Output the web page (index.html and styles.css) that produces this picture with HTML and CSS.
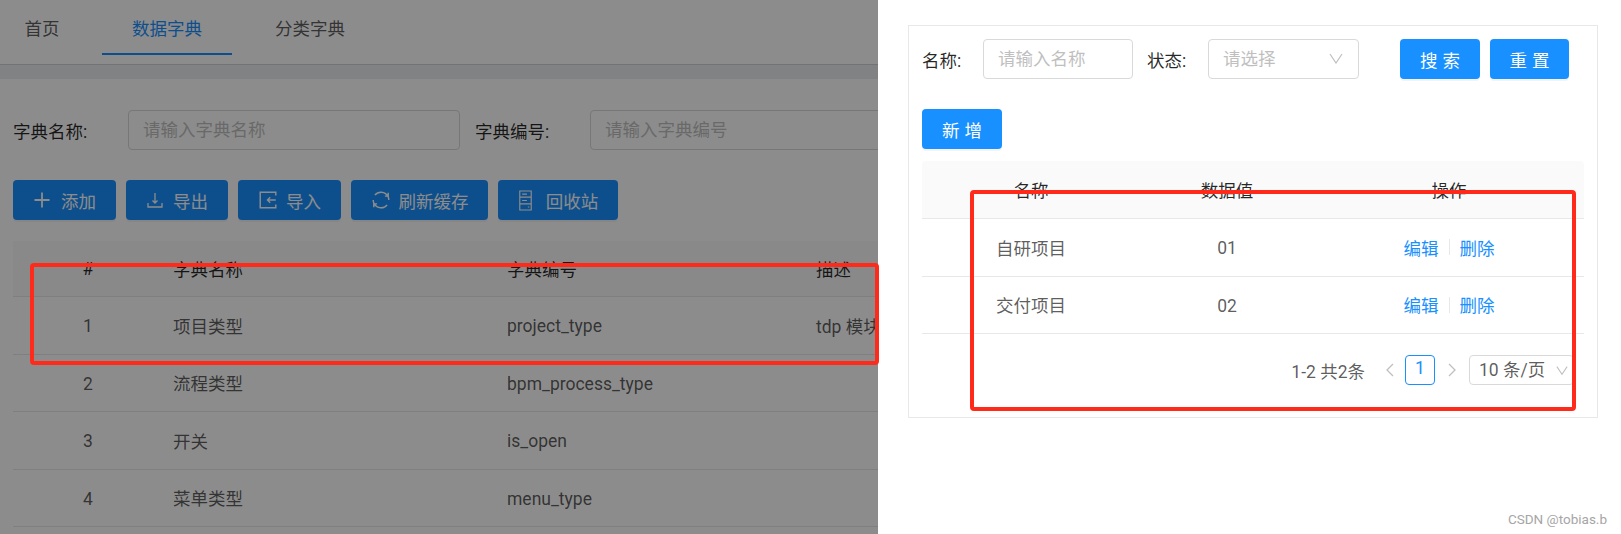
FILE: index.html
```html
<!DOCTYPE html>
<html lang="zh-CN">

<head>
  <meta charset="UTF-8">
  <title>数据字典</title>
  <link rel="stylesheet" href="styles.css">
</head>

<body>
  <div class="page">
    <main class="main">
      <nav class="tabs">
        <a class="tab tab-home">首页</a>
        <a class="tab tab-active">数据字典</a>
        <a class="tab">分类字典</a>
      </nav>
      <div class="strip"></div>

      <div class="filter">
        <label class="filter-label">字典名称:</label>
        <div class="field field-wide">请输入字典名称</div>
        <label class="filter-label filter-label-second">字典编号:</label>
        <div class="field field-wide field-second">请输入字典编号</div>
      </div>

      <div class="actions">
        <button class="btn btn-add">
          <svg class="ico" viewBox="0 0 18 18"><path d="M9 1.500v15M1.500 9h15" /></svg>添加
        </button>
        <button class="btn btn-export">
          <svg class="ico ico-export" viewBox="0 0 18 18"><path d="M9 2v10M6.500 9.500 9 12l2.500-2.500M2 12v4h14v-4" /></svg>导出
        </button>
        <button class="btn btn-import">
          <svg class="ico ico-import" viewBox="0 0 18 18"><path d="M16 5V2H2v14h14v-3M8.500 9H16M11 6.500 8.500 9l2.500 2.500" /></svg>导入
        </button>
        <button class="btn btn-refresh">
          <svg class="ico ico-refresh" viewBox="0 0 18 18"><path d="M3.500 4.500A7 7 0 0 1 15 5.500M2 9a7 7 0 0 0 .8 3.500M14.500 13.500A7 7 0 0 1 3 12.500M16 9a7 7 0 0 0-.8-3.500M15.500 2.500v3h-3M2.500 15.500v-3h3" /></svg>刷新缓存
        </button>
        <button class="btn btn-recycle">
          <svg class="ico ico-tall" viewBox="0 0 14 22"><path d="M1 1h12v20H1zM1 7.500h12M1 14.500h12M3.500 4.300h5M3.500 11h5M9.500 17.800H11" /></svg>回收站
        </button>
      </div>

      <div class="dict-table">
        <div class="dict-row dict-head">
          <span class="dict-num">#</span><span>字典名称</span><span>字典编号</span><span class="nowrap">描述</span>
        </div>
        <div class="dict-row">
          <span class="dict-num latin">1</span><span>项目类型</span><span class="latin">project_type</span><span class="nowrap">tdp 模块项目类型</span>
        </div>
        <div class="dict-row">
          <span class="dict-num latin">2</span><span>流程类型</span><span class="latin">bpm_process_type</span><span></span>
        </div>
        <div class="dict-row">
          <span class="dict-num latin">3</span><span>开关</span><span class="latin">is_open</span><span></span>
        </div>
        <div class="dict-row">
          <span class="dict-num latin">4</span><span>菜单类型</span><span class="latin">menu_type</span><span></span>
        </div>
      </div>
      <div class="mask"></div>
    </main>

    <aside class="drawer">
      <section class="card">
        <div class="search">
          <label class="search-label">名称:</label>
          <div class="field field-name">请输入名称</div>
          <label class="search-label search-label-second">状态:</label>
          <div class="field field-select">
            请选择
            <svg class="chevron" viewBox="0 0 14 11"><path d="M1 1 7 10l6-9" /></svg>
          </div>
          <button class="btn btn-primary btn-search"><span class="spaced">搜索</span></button>
          <button class="btn btn-primary btn-reset"><span class="spaced">重置</span></button>
        </div>

        <button class="btn btn-primary btn-new"><span class="spaced">新增</span></button>

        <div class="value-table">
          <div class="value-row value-head"><span>名称</span><span>数据值</span><span>操作</span></div>
          <div class="value-row">
            <span>自研项目</span><span class="latin">01</span>
            <span class="ops"><a>编辑</a><i class="divider"></i><a>删除</a></span>
          </div>
          <div class="value-row">
            <span>交付项目</span><span class="latin">02</span>
            <span class="ops"><a>编辑</a><i class="divider"></i><a>删除</a></span>
          </div>
        </div>

        <div class="pager">
          <span class="pager-total">1-2 共2条</span>
          <svg class="pager-arrow" viewBox="0 0 10 16"><path d="M8 2 2 8l6 6" /></svg>
          <span class="pager-item">1</span>
          <svg class="pager-arrow" viewBox="0 0 10 16"><path d="m2 2 6 6-6 6" /></svg>
          <div class="pager-size">
            10 条/页
            <svg class="chevron chevron-small" viewBox="0 0 14 11"><path d="M1 1 7 10l6-9" /></svg>
          </div>
        </div>
      </section>
      <span class="watermark">CSDN @tobias.b</span>
    </aside>

    <div class="mark mark-left"></div>
    <div class="mark mark-right"></div>
  </div>
</body>

</html>
```

FILE: styles.css
```css
* {
  box-sizing: border-box;
}

html,
body {
  margin: 0;
  height: 534px;
  overflow: hidden;
  background: #fff;
}

body {
  font-family: Roboto, "Noto Sans CJK SC", sans-serif;
  font-size: 17.500px;
  color: rgba(0, 0, 0, 0.65);
}

.page {
  position: relative;
  display: flex;
  width: 1621px;
  height: 534px;
  overflow: hidden;
}

.main {
  position: relative;
  width: 878px;
  flex: none;
  overflow: hidden;
}

.mask {
  position: absolute;
  inset: 0;
  background: rgba(0, 0, 0, 0.45);
}

/* tabs */
.tabs {
  display: flex;
  height: 65px;
  border-bottom: 1px solid #d0d2d5;
}

.tab {
  width: 130px;
  height: 55px;
  line-height: 59px;
  text-align: center;
}

.tab-home {
  width: 36px;
  margin-left: 24px;
  margin-right: 42px;
}

.tab-active {
  color: #1890ff;
  border-bottom: 2px solid #1890ff;
}

.tab-active + .tab {
  width: 70px;
  margin-left: 43px;
}

.strip {
  height: 14px;
  background: #e9edf1;
}

/* filter */
.filter {
  display: flex;
  align-items: center;
  padding: 31px 0 0 13px;
}

.filter-label {
  flex: none;
  width: 115px;
  color: rgba(0, 0, 0, 0.85);
}

.filter-label-second {
  margin-left: 15px;
}

.field {
  height: 40px;
  line-height: 38px;
  padding-left: 14px;
  border: 1px solid #d9d9d9;
  border-radius: 4px;
  color: #bfbfbf;
  background: #fff;
  flex: none;
}

.field-wide {
  width: 332px;
}

/* buttons */
.actions {
  display: flex;
  gap: 10px;
  margin: 30px 0 0 13px;
}

.btn {
  display: flex;
  align-items: center;
  justify-content: center;
  height: 40px;
  padding: 0;
  border: 0;
  border-radius: 4px;
  font: inherit;
  color: #fff;
  background: #1890ff;
  box-shadow: 0 2px 0 rgba(0, 0, 0, 0.045);
}

.btn-add { width: 103px; }
.btn-export { width: 102px; }
.btn-import { width: 103px; }
.btn-refresh { width: 137px; }
.btn-recycle { width: 120px; }

.ico {
  width: 18px;
  height: 18px;
  margin-right: 10px;
  fill: none;
  stroke: #fff;
  stroke-width: 1.300;
}

.btn-add .ico {
  stroke-width: 1.800;
}

.ico-export {
  margin-right: 9px;
}

.ico-import {
  width: 20px;
  height: 20px;
  margin-right: 8px;
}

.ico-refresh {
  width: 20px;
  height: 20px;
  margin-right: 8px;
}

.ico-tall {
  width: 15px;
  height: 21px;
  margin-right: 13px;
  stroke-width: 1.200;
}

/* dictionary table */
.dict-table {
  width: 1200px;
  margin: 21px 0 0 13px;
}

.dict-row {
  display: grid;
  grid-template-columns: 150px 334px 309px 1fr;
  align-items: center;
  height: 57.500px;
  border-bottom: 1px solid #e8e8e8;
}

.dict-row span:not(.dict-num) {
  padding-left: 10px;
}

.dict-head {
  height: 56px;
  color: rgba(0, 0, 0, 0.85);
  background: #fafafa;
}

.dict-num {
  text-align: center;
}

.latin {
  padding-top: 2px;
}

.nowrap {
  white-space: nowrap;
}

/* drawer */
.drawer {
  position: relative;
  flex: 1;
  padding: 25px 24px 0 30px;
  background: #fff;
}

.card {
  height: 393px;
  padding: 13px 13px 0;
  border: 1px solid #e8e8e8;
}

.search {
  display: flex;
  align-items: center;
}

.search-label {
  flex: none;
  width: 61px;
  color: rgba(0, 0, 0, 0.85);
}

.search-label-second {
  margin-left: 14px;
}

.field-name {
  width: 150px;
}

.field-select {
  position: relative;
  width: 151px;
}

.chevron {
  position: absolute;
  right: 15px;
  top: 13px;
  width: 14px;
  height: 11px;
  fill: none;
  stroke: #bfbfbf;
  stroke-width: 1.200;
}

.btn-primary {
  flex: none;
  width: 80px;
}

.btn-search {
  margin-left: 41px;
}

.btn-reset {
  width: 79px;
  margin-left: 10px;
}

.spaced {
  letter-spacing: 5px;
  margin-right: -5px;
}

.btn-new {
  margin-top: 30px;
}

.value-table {
  width: 662px;
  margin-top: 12px;
}

.value-row {
  display: grid;
  grid-template-columns: 218px 174px 270px;
  align-items: center;
  text-align: center;
  height: 57.500px;
  border-bottom: 1px solid #e8e8e8;
}

.value-head {
  height: 58px;
  border-radius: 4px 4px 0 0;
  color: rgba(0, 0, 0, 0.85);
  background: #fafafa;
}

.ops {
  display: flex;
  align-items: center;
  justify-content: center;
  color: #1890ff;
}

.divider {
  width: 1px;
  height: 16px;
  margin: 0 10px;
  background: #e8e8e8;
}

.pager {
  display: flex;
  align-items: center;
  justify-content: flex-end;
  width: 652px;
  margin-top: 21px;
}

.pager-total {
  margin-right: 20px;
}

.pager-arrow {
  width: 10px;
  height: 16px;
  fill: none;
  stroke: #bfbfbf;
  stroke-width: 1.300;
}

.pager-item {
  width: 30px;
  height: 30px;
  line-height: 25px;
  margin: 0 12px 0 10px;
  text-align: center;
  color: #1890ff;
  border: 1px solid #1890ff;
  border-radius: 4px;
}

.pager-size {
  position: relative;
  width: 105px;
  height: 30px;
  line-height: 28px;
  margin-left: 12px;
  padding-left: 9px;
  border: 1px solid #d9d9d9;
  border-radius: 4px;
}

.chevron-small {
  right: 5px;
  top: 9px;
  width: 12px;
}

.watermark {
  position: absolute;
  right: 15px;
  bottom: 7px;
  font-size: 13.500px;
  color: #a6a6a6;
}

/* red marks drawn over the screenshot */
.mark {
  position: absolute;
  border: 4px solid #ff2a1a;
  border-radius: 4px;
}

.mark-left {
  left: 30px;
  top: 263px;
  width: 849px;
  height: 102px;
}

.mark-right {
  left: 970px;
  top: 190px;
  width: 606px;
  height: 221px;
}
```
